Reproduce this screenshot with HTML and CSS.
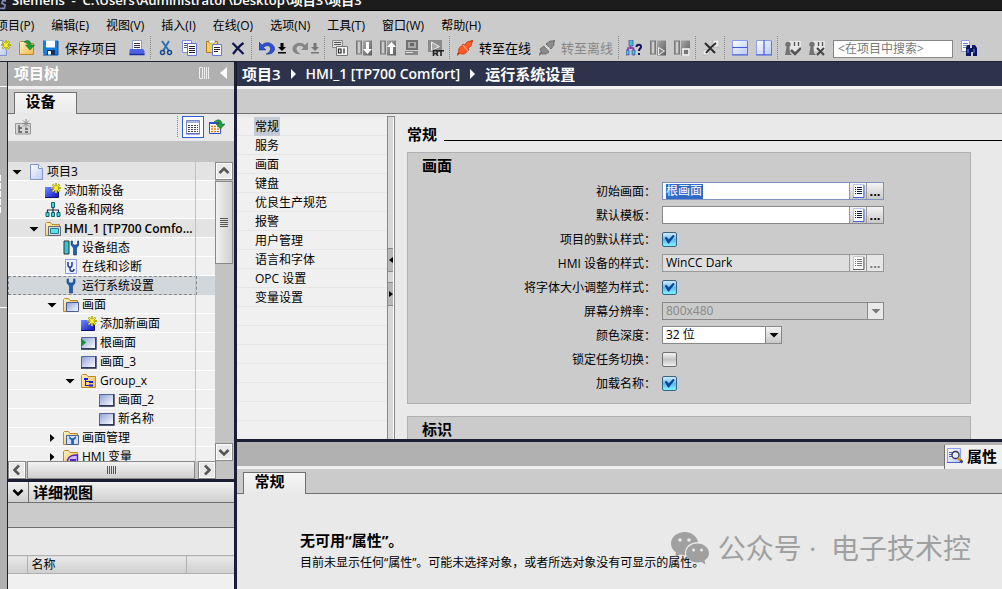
FILE: index.html
```html
<!DOCTYPE html>
<html lang="zh-CN">
<head>
<meta charset="utf-8">
<title>Siemens - 项目3</title>
<link rel="stylesheet" href="styles.css">
</head>
<body>
<svg class="defs" aria-hidden="true">
  <defs>
    <linearGradient id="gBlue" x1="0" y1="0" x2="1" y2="1"><stop offset="0" stop-color="#8f9fd6"/><stop offset="1" stop-color="#fff"/></linearGradient>
    <linearGradient id="gDeep" x1="0" y1="0" x2="1" y2="1"><stop offset="0" stop-color="#6f8cff"/><stop offset="1" stop-color="#0c12b8"/></linearGradient>
    <linearGradient id="gFold" x1="0" y1="0" x2="1" y2="1"><stop offset="0" stop-color="#fff3c4"/><stop offset="1" stop-color="#f0b848"/></linearGradient>
    <linearGradient id="gPage" x1="0" y1="0" x2="1" y2="1"><stop offset="0" stop-color="#fff"/><stop offset="1" stop-color="#b9c8f5"/></linearGradient>
    <linearGradient id="gGray" x1="0" y1="0" x2="1" y2="1"><stop offset="0" stop-color="#a8a8a8"/><stop offset="1" stop-color="#5c5c5c"/></linearGradient>
    <symbol id="i-star" viewBox="0 0 16 16"><path d="M11 0v10M6 5h10M7.500 1.500l7 7M14.500 1.500l-7 7" stroke="#6b6b20" stroke-width="2"/><path d="M11 0v10M6 5h10M7.500 1.500l7 7M14.500 1.500l-7 7" stroke="#fff230" stroke-width="1.200"/></symbol>
    <symbol id="i-page" viewBox="0 0 16 16"><path d="M2.500 .5h8l4 4v11h-12z" fill="url(#gPage)" stroke="#8295c8"/><path d="M10.500 .5v4h4" fill="#fff" stroke="#8295c8"/></symbol>
    <symbol id="i-folder" viewBox="0 0 16 16"><path d="M.5 14.500V2.500l1-1h4l1.500 2h7.500v11z" fill="url(#gFold)" stroke="#c08a28"/></symbol>
    <symbol id="i-add" viewBox="0 0 16 16"><path d="M0 4h13v11H0z" fill="url(#gDeep)"/><path d="M0 14.500h13.500V9" fill="none" stroke="#101470"/><use href="#i-star"/></symbol>
    <symbol id="i-screen" viewBox="0 0 16 16"><path d="M.5 2.500h14v11H.5z" fill="url(#gBlue)" stroke="#55679a"/><path d="M0 14h15V2" fill="none" stroke="#202c48" stroke-width="1.300"/></symbol>
    <symbol id="i-wrench" viewBox="0 0 16 16"><path d="M4 1v4l2.500 3v7h3V8L12 5V1h-1.500v3L9 5H7L5.500 4V1z" fill="#1d5fae" stroke="#123c78" stroke-width=".6"/></symbol>
    <symbol id="i-listpage" viewBox="0 0 16 16"><path d="M3.500 1.500h10v13h-10z" fill="#fff" stroke="#b8c4f0"/><path d="M3 14.500h11V2" fill="none" stroke="#4a64d8"/><path d="M5 4.500h1M7 4.500h5M5 6.500h1M7 6.500h5M5 8.500h1M7 8.500h5M5 10.500h1M7 10.500h5" stroke="currentColor"/></symbol>
    <symbol id="i-down" viewBox="0 0 8 16"><path d="M2.500 3h3v4H8L4 11 0 7h2.500zM0 12h8v1.500H0z"/></symbol>
    <symbol id="i-panel" viewBox="0 0 16 16"><path d="M0 .5h6v14H0z" fill="#777"/><path d="M1.500 1.500h3v12h-3z" fill="#ccc" stroke="#999"/><path d="M7 .5h9v15H7z" fill="url(#gGray)"/></symbol>
    <symbol id="i-person" viewBox="0 0 16 16"><path d="M3 1h13v10H3z" fill="#e6e6e6"/><circle cx="3" cy="4.500" r="2.700" fill="#737373"/><path d="M1.500 7h3l.5 6 2 2H0z" fill="#737373"/><path d="M9.500 2v4M13.500 2v4" stroke="#555" stroke-width="1.300"/></symbol>
    <symbol id="i-tdown" viewBox="0 0 12 12"><path d="M1.500 4h9L6 8.500z"/></symbol>
    <symbol id="i-tright" viewBox="0 0 12 12"><path d="M4 2v8l4.500-4z"/></symbol>
    <symbol id="i-chev" viewBox="0 0 12 12"><path d="M1.500 4L6 8.500 10.500 4" fill="none" stroke="currentColor" stroke-width="2.500"/></symbol>
  </defs>
</svg>

<header class="titlebar"><svg class="logo" viewBox="0 0 8 12"><path d="M7 1H3L2 4l4 2-1 4H0" fill="none" stroke="#7c86b8" stroke-width="2"/></svg><h1>Siemens&nbsp; -&nbsp; C:\Users\Administrator\Desktop\项目3\项目3</h1></header>

<nav class="menubar">
  <button>项目(P)</button><button>编辑(E)</button><button>视图(V)</button><button>插入(I)</button><button>在线(O)</button><button>选项(N)</button><button>工具(T)</button><button>窗口(W)</button><button>帮助(H)</button>
</nav>

<div class="toolbar">
  <div class="group first">
    <button aria-label="新建"><svg viewBox="0 0 16 16"><use href="#i-page" x="-3"/><use href="#i-star"/></svg></button>
    <button aria-label="打开"><svg viewBox="0 0 16 16"><use href="#i-folder"/><path d="M5 2c4-3 7-1 7 3h3.500L11 10 6.500 5H9C9 3 8 2 5 2z" fill="#1f9a36" stroke="#0d6420" stroke-width=".5"/></svg></button>
    <button class="labeled"><svg viewBox="0 0 16 16"><path d="M0 .5h15v14.500H2L0 13z" fill="#127fe0"/><path d="M3 .5h9v7H3z" fill="#fff"/><path d="M4 10h8v5H4z" fill="#10305c"/><path d="M5 11h3v4H5z" fill="#fff"/><path d="M0 15h15V1" fill="none" stroke="#0b4d9c"/></svg><span>保存项目</span></button>
    <button class="print" aria-label="打印"><svg viewBox="0 0 16 16"><path d="M3.500.5h9v9h-9z" fill="#fff" stroke="#8e9cc8"/><path d="M5 3.500h6M5 5.500h6M5 7.500h6" stroke="#334"/><path d="M1 9h13l1.500 2v4H.5v-4z" fill="#4b63e0"/><path d="M.5 14.500h15" stroke="#1b2aa0" stroke-width="1.500"/></svg></button>
  </div>
  <div class="group">
    <button aria-label="剪切"><svg viewBox="0 0 16 16"><path d="M4 1l7 10M11 1L5 11" stroke="#3270b0" stroke-width="2"/><circle cx="4.500" cy="12.500" r="2" fill="none" stroke="#174a8a" stroke-width="1.500"/><circle cx="11.500" cy="12.500" r="2" fill="none" stroke="#174a8a" stroke-width="1.500"/></svg></button>
    <button aria-label="复制"><svg viewBox="0 0 16 16"><path d="M.5.5h9v12h-9z" fill="#fff" stroke="#7d8fd8"/><path d="M2 3.500h5M2 5.500h5M2 7.500h5" stroke="#557"/><path d="M5.500 3.500h9v12h-9z" fill="#fff" stroke="#6478d8"/><path d="M7 6.500h6M7 8.500h6M7 10.500h6M7 12.500h6" stroke="#223"/></svg></button>
    <button aria-label="粘贴"><svg viewBox="0 0 16 16"><path d="M.5 1.500h11v11H.5z" fill="#f5cf5c" stroke="#a87c22"/><path d="M3 0h6v3H3z" fill="#fff" stroke="#888" stroke-width=".6"/><path d="M6.500 4.500h9v11h-9z" fill="#fff" stroke="#6478d8"/><path d="M8 7.500h6M8 9.500h6M8 11.500h4" stroke="#223"/></svg></button>
    <button aria-label="删除"><svg viewBox="0 0 16 16"><path d="M2.500 3l11 11M13.500 3C9 6 6 10 3 14" fill="none" stroke="#10144c" stroke-width="2.200"/></svg></button>
  </div>
  <div class="group tight">
    <button aria-label="撤销"><svg viewBox="0 0 16 16"><path d="M0 2v8h7L4.500 7.500C8 4 12 6 11.500 9S9 13 7 14c5 1 9-2 8.500-6S8 0 3 5z" fill="#2d50d0" stroke="#1a2f96" stroke-width=".5"/></svg></button>
    <button class="narrow" aria-label="撤销列表"><svg viewBox="0 0 8 16"><use href="#i-down"/></svg></button>
    <button class="redo" aria-label="重做"><svg viewBox="0 0 16 16"><path d="M16 2v8H9l2.500-2.500C8 4 4 6 4.500 9S7 13 9 14C4 15 0 12 .5 8S8 0 13 5z" fill="#868686"/></svg></button>
    <button class="narrow" aria-label="重做列表"><svg viewBox="0 0 8 16" fill="#777"><use href="#i-down"/></svg></button>
  </div>
  <div class="group">
    <button aria-label="编译"><svg viewBox="0 0 16 16"><path d="M.5.5h10v7H.5z" fill="#ddd" stroke="#888"/><path d="M2 2.500h7M2 4.500h7" stroke="#555"/><path d="M4.500 6.500h11v9h-11z" fill="#f4f4f4" stroke="#777"/><path d="M6.500 9h2.500v4H6.500zM12 8.500v5" fill="none" stroke="#222" stroke-width="1.200"/></svg></button>
    <button aria-label="下载"><svg viewBox="0 0 16 16"><use href="#i-panel"/><path d="M10 2h3v7h3l-4.500 5L7 9h3z" fill="#fff"/></svg></button>
    <button aria-label="上传"><svg viewBox="0 0 16 16"><use href="#i-panel"/><path d="M10 14h3V7h3l-4.500-5L7 7h3z" fill="#fff"/></svg></button>
    <button aria-label="仿真"><svg viewBox="0 0 16 16"><path d="M2 0h12v10H2z" fill="#707070"/><path d="M4 2h8v6H4z" fill="#aaa"/><path d="M6 3h4v3H6z" fill="#666"/><path d="M1 11h13v4H1z" fill="#888"/><path d="M2 12.500h7" stroke="#ddd"/></svg></button>
    <button aria-label="启动运行系统"><svg viewBox="0 0 16 16"><path d="M0 0h14v12H0z" fill="#8a8a8a"/><path d="M3.500 2l8 4.500-8 4z" fill="#aaa" stroke="#eee"/><path d="M5.500 16v-5.500H8a1.500 1.500 0 010 3H6M8 13.500l2 2.500M10 10.700h6M13 11v5" fill="none" stroke="#222" stroke-width="1.600"/></svg></button>
  </div>
  <div class="group">
    <button class="labeled"><svg viewBox="0 0 16 16"><path d="M0 15l3-3M16 0l-3 3" stroke="#d6400c" stroke-width="2"/><path d="M2 13c-1-4 0-6 3-7l1-2 2 1c1-3 3-4 7-4 0 4-1 6-4 7l1 2-2 1c-1 3-4 4-8 2z" fill="#ff5a24" stroke="#b7320b" stroke-width=".7"/><path d="M6 5l5 6" stroke="#ffc0a0"/></svg><span>转至在线</span></button>
    <button class="labeled" disabled><svg viewBox="0 0 16 16"><path d="M0 15l3-3M16 0l-3 3" stroke="#777" stroke-width="2"/><path d="M1 9l4-3 5 6-3 2H3zM7 4l4-3h4v4l-3 4z" fill="#8b8b8b" stroke="#666" stroke-width=".8"/><path d="M6 6l2 2M9 9l1-2" stroke="#eee"/></svg><span>转至离线</span></button>
  </div>
  <div class="group">
    <button aria-label="可访问的设备"><svg viewBox="0 0 16 16"><path d="M4.500 5v4M2 12V8h5.500v4" fill="none" stroke="#7d3bb0" stroke-width="1.500"/><path d="M3 0h4v6H3zM0 10h3v5H0zM6 10h3v5H6z" fill="#30c6d8" stroke="#6b35a0" stroke-width=".7"/><path d="M10.500 7c0-3 5-3 4.500 0-.2 1.500-2 1.800-2 4M13 13v2" fill="none" stroke="#10145c" stroke-width="2"/></svg></button>
    <button aria-label="启动 CPU"><svg viewBox="0 0 16 16"><use href="#i-panel"/><path d="M8.500 7.500l6 3.500-6 4z" fill="#888" stroke="#eee"/></svg></button>
    <button aria-label="停止 CPU"><svg viewBox="0 0 16 16"><use href="#i-panel"/><path d="M9 9h6v6H9z" fill="#777" stroke="#fff" stroke-width="1.500"/></svg></button>
  </div>
  <div class="group">
    <button aria-label="交叉引用"><svg viewBox="0 0 16 16"><path d="M10 0h6v7h-6zM0 10h6v5H0z" fill="#ececec" stroke="#aaa" stroke-width=".6"/><path d="M2 3l10 10M13 3C9 6 6 9 3 13" fill="none" stroke="#2b2b2b" stroke-width="2"/></svg></button>
  </div>
  <div class="group">
    <button aria-label="水平拆分"><svg viewBox="0 0 16 16"><path d="M.5.5h15v14H.5z" fill="url(#gPage)" stroke="#8d9cf0"/><path d="M0 7.500h16M0 15h16V1" fill="none" stroke="#4760d8" stroke-width="1.200"/></svg></button>
    <button aria-label="垂直拆分"><svg viewBox="0 0 16 16"><path d="M.5.5h15v14H.5z" fill="url(#gPage)" stroke="#8d9cf0"/><path d="M8 0v15M0 15h16V1" fill="none" stroke="#4760d8" stroke-width="1.200"/></svg></button>
  </div>
  <div class="group">
    <button aria-label="保存布局"><svg viewBox="0 0 16 16"><use href="#i-person"/><path d="M6 10l4 4 6-6" fill="none" stroke="#555" stroke-width="2.500"/></svg></button>
    <button aria-label="删除布局"><svg viewBox="0 0 16 16"><use href="#i-person"/><path d="M8 8l7 7M15 8l-7 7" stroke="#444" stroke-width="2"/></svg></button>
    <input class="search" type="text" aria-label="搜索" placeholder="&lt;在项目中搜索&gt;">
    <button aria-label="查找"><svg viewBox="0 0 16 16"><path d="M.5.500h8v11h-8z" fill="#fff" stroke="#8d9cf0"/><path d="M2 3.500h5M2 5.500h5M2 7.500h3" stroke="#6a82d8"/><path d="M5 8l1-3h3v3h2V5h3l2 3v8h-4v-4h-2v4H5z" fill="#0d1660"/><path d="M7 9v4M13 9v4" stroke="#6f8cf0"/></svg></button>
  </div>
</div>

<div class="workspace">
  <aside class="rail"><i class="rail-top"></i><i class="rail-marks"></i><i class="rail-line"></i></aside>

  <section class="sidebar">
    <div class="panel-title"><h2>项目树</h2><svg class="pin" viewBox="0 0 11 12"><path d="M.5.5h3v11h-3zM5.500 0v12M7.500 0v12M9.500 0v12" fill="none" stroke="#eee"/></svg><svg class="fold" viewBox="0 0 7 12"><path d="M7 0v12L0 6z" fill="#fff"/></svg></div>
    <div class="tabs"><button class="tab">设备</button></div>
    <div class="tree-tools">
      <button aria-label="新建组"><svg viewBox="0 0 16 16"><path d="M.5 15V4.500h15V15z" fill="#d8d8d8" stroke="#999"/><path d="M4 6v7h3M4 9h3M10 10h3M10 13h3" fill="none" stroke="#555" stroke-width="1.300"/><path d="M11 0v9M7 4.500h8M8 1.500l6 6M14 1.500l-6 6" stroke="#888"/></svg></button>
      <span class="grow"></span>
      <button class="active" aria-label="列表视图"><svg viewBox="0 0 16 16"><path d="M1.500 1.500h13v13h-13z" fill="#fff" stroke="#7c88b8"/><path d="M2 3h12" stroke="#a3b2e6" stroke-width="2"/><path d="M3 6.500h10M3 8.500h10M3 10.500h10M3 12.500h10" stroke="#445" stroke-dasharray="2 1"/><path d="M1 15h14" stroke="#4058c0"/></svg></button>
      <button aria-label="总览"><svg viewBox="0 0 16 16"><path d="M.5 3.500h11v11H.5z" fill="#fff" stroke="#3150c0"/><path d="M0 4h11" stroke="#3152d0" stroke-width="2"/><path d="M2 7.500h9M2 10h9M2 12.500h9" stroke="#e08018" stroke-width="1.500" stroke-dasharray="2 1"/><path d="M5 3c4-4 8-2 8 2h3l-4.500 5L7 5h3C10 3 8 2 5 3z" fill="#1f9a36" stroke="#0d6420" stroke-width=".5"/></svg></button>
    </div>
    <div class="tree-gap"></div>
    <div class="tree-area">
      <ul class="tree">
        <li class="l0 shade"><svg class="tw" viewBox="0 0 12 12"><use href="#i-tdown"/></svg><svg viewBox="0 0 16 16"><use href="#i-page"/></svg>项目3</li>
        <li class="l1"><i class="tw"></i><svg viewBox="0 0 16 16"><use href="#i-add"/></svg>添加新设备</li>
        <li class="l1"><i class="tw"></i><svg viewBox="0 0 16 16"><path d="M8 4v8M2.500 12V8h11v4" fill="none" stroke="#234" stroke-width="1.200"/><path d="M6.500.5h3v5h-3zM1 10.500h3v4H1zM6.500 10.500h3v4h-3zM12 10.500h3v4h-3z" fill="#45d6e0" stroke="#12606c"/></svg>设备和网络</li>
        <li class="l1 shade strong"><svg class="tw" viewBox="0 0 12 12"><use href="#i-tdown"/></svg><svg viewBox="0 0 16 16"><use href="#i-folder"/><path d="M3.500 5.500h12v9h-12z" fill="#d7dce4" stroke="#667"/><path d="M5.500 7.500h8v5h-8z" fill="#5fe0e8" stroke="#2a7a8c"/></svg>HMI_1 [TP700 Comfo...</li>
        <li class="l2"><i class="tw"></i><svg viewBox="0 0 16 16"><path d="M1 1h5v13H1z" fill="#35c6cc" stroke="#333"/><use href="#i-wrench" x="4"/></svg>设备组态</li>
        <li class="l2"><i class="tw"></i><svg viewBox="0 0 16 16"><path d="M2.500.5h11v14h-11z" fill="#eef2ff" stroke="#8ea0e0"/><path d="M5 3v3c0 3 4 3 4 0V3M7 8v2c0 3 4 3 4 0" fill="none" stroke="#17308c" stroke-width="1.400"/></svg>在线和诊断</li>
        <li class="l2 selected"><i class="tw"></i><svg viewBox="0 0 16 16"><use href="#i-wrench"/></svg>运行系统设置</li>
        <li class="l2"><svg class="tw" viewBox="0 0 12 12"><use href="#i-tdown"/></svg><svg viewBox="0 0 16 16"><use href="#i-folder"/><path d="M3.500 5.500h12v9h-12z" fill="url(#gBlue)" stroke="#4b5f95"/></svg>画面</li>
        <li class="l3"><i class="tw"></i><svg viewBox="0 0 16 16"><use href="#i-add"/></svg>添加新画面</li>
        <li class="l3"><i class="tw"></i><svg viewBox="0 0 16 16"><use href="#i-screen"/><path d="M0 3v9l5-4.500z" fill="#149436"/></svg>根画面</li>
        <li class="l3"><i class="tw"></i><svg viewBox="0 0 16 16"><use href="#i-screen"/></svg>画面_3</li>
        <li class="l3"><svg class="tw" viewBox="0 0 12 12"><use href="#i-tdown"/></svg><svg viewBox="0 0 16 16"><use href="#i-folder"/><path d="M4.500 6v7M4 8.500h4M4 12.500h5" fill="none" stroke="#1a1ae0"/><path d="M3 5h4v2H3zM8 8h4v2H8zM8 11.500h4v2H8z" fill="#1a1ae0"/></svg>Group_x</li>
        <li class="l4"><i class="tw"></i><svg viewBox="0 0 16 16"><use href="#i-screen"/></svg>画面_2</li>
        <li class="l4"><i class="tw"></i><svg viewBox="0 0 16 16"><use href="#i-screen"/></svg>新名称</li>
        <li class="l2"><svg class="tw" viewBox="0 0 12 12"><use href="#i-tright"/></svg><svg viewBox="0 0 16 16"><use href="#i-folder"/><path d="M3.500 5.500h12v9h-12z" fill="#cfe0ff" stroke="#4b5f95"/><path d="M6.500 6.500v2l2 1.500v4h2v-4l2-1.500v-2l-2 2h-2z" fill="#1d5fae" stroke="#1d5fae" stroke-width=".6"/></svg>画面管理</li>
        <li class="l2"><svg class="tw" viewBox="0 0 12 12"><use href="#i-tright"/></svg><svg viewBox="0 0 16 16"><use href="#i-folder"/><path d="M4.500 11c2-5 6-5 10-5v9h-10z" fill="#cdbcf8" stroke="#5a28b8" stroke-width="1.500"/><path d="M7 11h6" stroke="#5a28b8" stroke-width="2"/></svg>HMI 变量</li>
      </ul>
      <div class="vscroll"><button aria-label="向上"><svg class="flip" viewBox="0 0 12 12"><use href="#i-chev"/></svg></button><div class="thumb-v"><i></i></div><span class="grow"></span><button aria-label="向下"><svg viewBox="0 0 12 12"><use href="#i-chev"/></svg></button></div>
    </div>
    <div class="hscroll"><button aria-label="向左"><svg class="left" viewBox="0 0 12 12"><use href="#i-chev"/></svg></button><div class="thumb-h"><i></i></div><button aria-label="向右"><svg class="right" viewBox="0 0 12 12"><use href="#i-chev"/></svg></button></div>
    <div class="details">
      <div class="details-head"><button aria-label="折叠"><svg viewBox="0 0 12 12"><use href="#i-chev"/></svg></button><h2>详细视图</h2></div>
      <div class="details-bar"></div>
      <div class="details-tools"></div>
      <table class="details-table"><thead><tr><th class="c1"></th><th>名称</th><th class="c3"></th></tr></thead></table>
    </div>
  </section>

  <main class="main">
    <nav class="crumbs"><span>项目3</span><svg viewBox="0 0 5 10"><path d="M0 0v10l5-5z"/></svg><span class="latin">HMI_1 [TP700 Comfort]</span><svg viewBox="0 0 5 10"><path d="M0 0v10l5-5z"/></svg><span>运行系统设置</span></nav>
    <div class="editor-bar"></div>
    <div class="editor">
      <ul class="sections">
        <li><span class="current">常规</span></li><li><span>服务</span></li><li><span>画面</span></li><li><span>键盘</span></li><li><span>优良生产规范</span></li><li><span>报警</span></li><li><span>用户管理</span></li><li><span>语言和字体</span></li><li><span>OPC 设置</span></li><li><span>变量设置</span></li>
      </ul>
      <div class="splitter"><button aria-label="收起"><svg viewBox="0 0 4 6"><path d="M4 0v6L0 3z"/></svg></button><button aria-label="展开"><svg viewBox="0 0 4 6"><path d="M0 0v6l4-3z"/></svg></button></div>
      <div class="form">
        <h2 class="rule">常规</h2>
        <fieldset class="card">
          <h3>画面</h3>
          <div class="rows">
            <label for="f1">初始画面<b>：</b></label><div class="picker focus"><div class="entry"><input id="f1" type="text" value="根画面" class="marked" size="4"></div><button aria-label="列表"><svg viewBox="0 0 16 16"><use href="#i-listpage"/></svg></button><button class="dots">...</button></div>
            <label for="f2">默认模板<b>：</b></label><div class="picker"><div class="entry"><input id="f2" type="text"></div><button aria-label="列表"><svg viewBox="0 0 16 16"><use href="#i-listpage"/></svg></button><button class="dots">...</button></div>
            <label for="f3">项目的默认样式<b>：</b></label><input id="f3" class="check" type="checkbox" checked>
            <label for="f4">HMI 设备的样式<b>：</b></label><div class="picker off"><div class="entry"><input id="f4" type="text" value="WinCC Dark" readonly></div><button aria-label="列表" disabled><svg viewBox="0 0 16 16"><use href="#i-listpage"/></svg></button><button class="dots" disabled>...</button></div>
            <label for="f5">将字体大小调整为样式<b>：</b></label><input id="f5" class="check" type="checkbox" checked>
            <label for="f6">屏幕分辨率<b>：</b></label><div class="drop off"><select id="f6" disabled><option>800x480</option></select><span><svg viewBox="0 0 12 12"><use href="#i-tdown"/></svg></span></div>
            <label for="f7">颜色深度<b>：</b></label><div class="drop short"><select id="f7"><option>32 位</option></select><span><svg viewBox="0 0 12 12"><use href="#i-tdown"/></svg></span></div>
            <label for="f8">锁定任务切换<b>：</b></label><input id="f8" class="check" type="checkbox">
            <label for="f9">加载名称<b>：</b></label><input id="f9" class="check" type="checkbox" checked>
          </div>
        </fieldset>
        <fieldset class="card"><h3>标识</h3></fieldset>
      </div>
    </div>
    <section class="inspector">
      <div class="inspector-head"><button><svg viewBox="0 0 16 16"><path d="M.5.500h13v14H.5z" fill="url(#gPage)" stroke="#8d9cf0"/><path d="M0 14.500h13" stroke="#4760d8"/><path d="M2 4.500h4M2 6.500h3M2 8.500h3" stroke="#4760d8"/><circle cx="8.500" cy="7" r="3.500" fill="#e6f0ff" stroke="#334" stroke-width="1.300"/><path d="M11 10l4 4" stroke="#e09018" stroke-width="2.500"/><path d="M13.500 12.500l2 2" stroke="#1c3f98" stroke-width="2.500"/></svg>属性</button></div>
      <div class="tabs"><button class="tab">常规</button></div>
      <div class="inspector-body"><h3>无可用“属性”。</h3><p>目前未显示任何“属性”。可能未选择对象，或者所选对象没有可显示的属性。</p></div>
    </section>
  </main>
</div>
<div class="watermark"><svg viewBox="0 0 38 33"><path d="M14 0C6 0 0 5 0 11.500c0 4 2 7 5 9L4 25l5-2.500 5 .8C13 15 19 10 27 10 26 4 20 0 14 0z"/><path d="M26.500 11.500C20 11.500 15 16 15 21s5 9.500 11.500 9.500l4-.5 4 2.500-1-4c3-2 4.500-4.500 4.500-7.500 0-5-5-9.500-11.500-9.500z"/><g fill="#e9e9e9"><circle cx="9" cy="8" r="1.800"/><circle cx="18" cy="8" r="1.800"/><circle cx="22.500" cy="18" r="1.500"/><circle cx="30.500" cy="18" r="1.500"/></g></svg><span>公众号 ·&nbsp; 电子技术控</span></div>
</body>
</html>
```
FILE: styles.css
```css
* { box-sizing: border-box; }
body {
  margin: 0;
  height: 100vh;
  display: flex;
  flex-direction: column;
  overflow: hidden;
  background: #cbcbcb;
  color: #000;
  font: 12px/18px "Open Sans", "Noto Sans CJK SC", sans-serif;
}
h1, h2, h3, p, ul { margin: 0; padding: 0; }
ul { list-style: none; }
h2, h3 { font-size: 15px; line-height: 20px; }
button { font: inherit; color: inherit; border: 0; padding: 0; margin: 0; background: none; }
svg { display: block; width: 16px; height: 16px; flex: none; }
.defs { position: absolute; width: 0; height: 0; }
.grow { flex: 1; }

.titlebar { display: flex; flex: none; align-items: flex-end; gap: 5px; height: 11px; background: #1c1c1c; border-bottom: 1px solid #000; color: #fff; overflow: hidden; }
.titlebar h1 { font-size: 13px; line-height: 20px; font-weight: 600; white-space: nowrap; }
.titlebar .logo { width: 7px; height: 10px; }
.menubar { display: flex; flex: none; align-items: center; gap: 17px; height: 25px; padding-top: 4px; margin-left: -4px; white-space: nowrap; }
.toolbar { display: flex; flex: none; height: 26px; padding-bottom: 2px; border-bottom: 1px solid #1c2230; white-space: nowrap; }
.group { display: flex; flex: none; align-items: center; gap: 8px; margin-left: 5px; padding-left: 7px; border-left: 1px dotted #888; }
.group.first { margin-left: -5px; padding: 0; border: 0; }
.group.tight { gap: 3px; }
.redo { margin-left: 3px; }
.narrow svg { width: 8px; }
.labeled { display: flex; align-items: center; gap: 6px; font-size: 13px; }
.labeled:disabled { color: #888; }
.print { margin-left: 4px; }
.search { width: 120px; height: 18px; margin-top: 2px; padding: 0 4px; border: 1px solid #888; background: #fff; font: inherit; }
.search::placeholder { color: #777; opacity: 1; }

.workspace { display: flex; flex: 1; min-height: 0; }
.rail { width: 8px; flex: none; background: #b1b1b1; border-right: 1px solid #1c1e33; display: flex; flex-direction: column; }
.rail-top { height: 25px; border-bottom: 1px solid #fff; }
.rail-marks { width: 1px; height: 40px; margin-top: 88px; background: repeating-linear-gradient(#fff 0 6px, #b1b1b1 6px 8px); }
.rail-line { margin-top: 92px; border-top: 1px solid #fff; }

.sidebar { width: 229px; flex: none; display: flex; flex-direction: column; border-right: 3px solid #1c1e33; background: #c3c3c3; }
.panel-title { display: flex; flex: none; align-items: center; height: 27px; padding: 0 7px 2px 6px; background: #b1b1b1; border-bottom: 3px solid #efefef; color: #fff; }
.panel-title h2 { flex: 1; }
.panel-title .pin { width: 11px; height: 12px; margin-right: 10px; }
.panel-title .fold { width: 7px; height: 12px; }
.tabs { display: flex; flex: none; align-items: flex-end; height: 25px; padding-left: 6px; background: #cbcbcb; box-shadow: inset 0 -1px #707070; }
.tab { width: 63px; height: 22px; padding: 0 10px 4px 0; border: 1px solid #707070; border-bottom: 0; background: linear-gradient(#f6f6f6, #e9e9e9); font-size: 15px; line-height: 17px; font-weight: 700; }
.tree-tools { display: flex; flex: none; align-items: center; height: 27px; padding: 0 9px 2px 7px; background: #e9e9e9; }
.tree-tools .grow { align-self: stretch; margin: 2px 4px 2px 0; border-right: 1px dotted #888; }
.tree-tools .active { padding: 2px; margin-right: 5px; border: 1px solid #2f5fd0; background: #fff; }
.tree-gap { flex: none; height: 21px; }
.tree-area { display: flex; flex: 1; min-height: 0; overflow: hidden; }
.tree { flex: 1; position: relative; }
.tree::after { content: ""; position: absolute; top: 0; bottom: 0; right: 19px; border-left: 1px solid #c3c3c3; }
.tree li { display: flex; align-items: center; height: 19px; gap: 3px; background: #f0f0f0; box-shadow: inset 0 -1px #fff; white-space: nowrap; }
.tree .tw { width: 12px; height: 12px; margin-right: 2px; }
.tree .l0 { padding-left: 3px; }
.tree .l1 { padding-left: 20px; }
.tree .l2 { padding-left: 38px; }
.tree .l3 { padding-left: 56px; }
.tree .l4 { padding-left: 74px; }
.tree .shade { background: #e3e3e3; }
.tree .strong { font-weight: 600; }
.tree .selected { position: relative; background: #d2d7dc; box-shadow: none; }
.tree .selected::after { content: ""; position: absolute; inset: 0 18px 0 0; border: 1px dashed #888; }
.vscroll { width: 19px; flex: none; display: flex; flex-direction: column; gap: 1px; background: #c3c3c3; }
.vscroll button, .hscroll button { display: grid; place-items: center; width: 18px; height: 18px; border: 1px solid #888; background: #e9e9e9; box-shadow: inset 0 0 0 1px #fff; color: #555; }
.vscroll svg, .hscroll svg { width: 12px; height: 12px; }
.flip { transform: rotate(180deg); }
.left { transform: rotate(90deg); }
.right { transform: rotate(-90deg); }
.thumb-v { display: grid; place-items: center; width: 18px; height: 83px; border: 1px solid #888; background: linear-gradient(90deg, #f2f2f2, #cfcfcf); }
.thumb-v i { width: 8px; height: 9px; background: repeating-linear-gradient(#555 0 1px, transparent 1px 2px); }
.hscroll { display: flex; flex: none; gap: 1px; height: 18px; margin-right: 18px; }
.thumb-h { flex: 1; display: grid; place-items: center; margin-right: 2px; border: 1px solid #888; background: linear-gradient(#f2f2f2, #cfcfcf); }
.thumb-h i { width: 9px; height: 8px; background: repeating-linear-gradient(90deg, #555 0 1px, transparent 1px 2px); }
.details { flex: none; height: 110px; border-top: 3px solid #1c1e33; background: #f0f0f0; }
.details-head { display: flex; height: 21px; border-bottom: 1px solid #707070; background: linear-gradient(#f2f2f2, #cfcfcf); }
.details-head button { display: grid; place-items: center; width: 21px; margin-right: 4px; border-right: 1px solid #707070; }
.details-head svg { width: 12px; height: 12px; }
.details-bar { height: 25px; border-bottom: 1px solid #707070; background: #cbcbcb; }
.details-tools { height: 27px; background: #e9e9e9; }
.details-table { width: 100%; table-layout: fixed; border-collapse: collapse; }
.details-table th { height: 18px; padding: 0 0 0 4px; border: solid #b0b0b0; border-width: 1px 1px 1px 0; background: linear-gradient(#e9e9e9, #cfcfcf); font-weight: 400; text-align: left; line-height: 16px; }
.details-table .c1 { width: 19px; }
.details-table .c3 { width: 48px; border-right: 0; }

.main { flex: 1; min-width: 0; display: flex; flex-direction: column; background: #e9e9e9; }
.crumbs { display: flex; flex: none; align-items: center; gap: 10px; height: 27px; padding-left: 5px; background: #2c334b; border-bottom: 3px solid #f2f2f2; color: #fff; font-size: 15px; font-weight: 600; white-space: nowrap; }
.crumbs .latin { font-size: 14px; }
.crumbs svg { width: 5px; height: 10px; fill: #fff; }
.editor-bar { flex: none; height: 25px; border-bottom: 1px solid #707070; }
.editor-bar, .inspector .tabs { background: #cbcbcb; }
.editor { display: flex; flex: 1; min-height: 0; overflow: hidden; }
.sections { width: 150px; flex: none; margin-top: 3px; background: repeating-linear-gradient(#f0f0f0 0 18px, #e6e6e6 18px 19px); }
.sections li { height: 19px; padding-left: 17px; line-height: 19px; }
.sections span { display: inline-block; padding: 0 1px; }
.sections .current { background: #c2cbd6; }
.splitter { width: 8px; flex: none; margin-top: 2px; padding-top: 131px; border: solid #888; border-width: 1px 1px 0; background: #d8d8d8; box-shadow: inset -1px 0 #fff; display: flex; flex-direction: column; gap: 10px; }
.splitter button { display: grid; place-items: center; width: 5px; height: 24px; border: solid #888; border-width: 1px 0; background: #b8b8b8; }
.splitter svg { width: 4px; height: 6px; }
.form { flex: 1; min-width: 0; padding: 10px 0 0 12px; }
.rule { display: flex; gap: 7px; }
.rule::after { content: ""; flex: 1; height: 1px; margin-top: 16px; background: #000; }
.card { margin: 8px 31px 12px 0; padding: 2px 14px 8px; min-height: 42px; border: 1px solid #b0b0b0; background: #cbcbcb; }
.rows { display: grid; grid-template-columns: 234px minmax(0, 1fr); column-gap: 6px; grid-auto-rows: 24px; align-items: center; padding-top: 4px; }
.rows label { text-align: right; white-space: nowrap; }
.rows b { font-family: "Noto Sans CJK JP", sans-serif; font-weight: 400; }
.picker { display: flex; width: 222px; height: 18px; border: 1px solid #888; background: #fff; }
.picker.focus { border-color: #7f92c0; }
.picker .entry { flex: 1; min-width: 0; display: flex; align-items: center; }
.picker input { width: 100%; height: 15px; margin: 0 3px; padding: 0; border: 0; background: none; font: inherit; outline: 0; }
.picker input.marked { width: 37px; background: #316ac5; color: #fff; }
.picker button { display: grid; place-items: center; width: 17px; border-left: 1px solid #999; background: linear-gradient(#f4f4f4, #c8c8c8); color: #102060; }
.picker svg { width: 16px; height: 16px; }
.picker .dots { color: #000; font-weight: 700; font-size: 13px; line-height: 14px; }
.picker.off { border-color: #999; background: #dedede; }
.picker.off button { background: #e6e6e6; color: #777; }
.picker.off svg { filter: grayscale(1); }
.drop { display: grid; width: 222px; height: 18px; }
.drop.short { width: 120px; }
.drop select, .drop span { grid-area: 1 / 1; }
.drop select { appearance: none; width: 100%; height: 18px; padding: 0 3px; border: 1px solid #888; border-radius: 0; background: #fff; color: #000; font: inherit; line-height: 16px; opacity: 1; }
.drop span { justify-self: end; display: grid; place-items: center; width: 17px; border: 1px solid #888; background: linear-gradient(#f4f4f4, #c8c8c8); pointer-events: none; }
.drop svg { width: 12px; height: 12px; }
.drop.off select { background: #cbcbcb; color: #888; }
.drop.off span { background: #e9e9e9; }
.drop.off svg { fill: #777; }
.check { appearance: none; display: grid; place-items: center; width: 15px; height: 15px; margin: 0; border: 1px solid #707070; border-radius: 2px; background: linear-gradient(#f4f4f4, #c4c4c4 50%, #f0f0f0); }
.check:checked { border-color: #38618c; background: linear-gradient(#d8ecfa, #66b8e8 50%, #7cf4fc); }
.check:checked::after { content: ""; width: 10px; height: 9px; background: #08489c; clip-path: polygon(0 35%, 20% 25%, 42% 55%, 90% 0, 100% 20%, 45% 100%, 35% 100%); }

.inspector { flex: none; border-top: 3px solid #1c1e33; }
.inspector-head { display: flex; justify-content: flex-end; height: 27px; padding-top: 3px; background: linear-gradient(#b1b1b1 24px, #f0f0f0 24px); }
.inspector-head button { display: flex; align-items: center; gap: 4px; width: 58px; padding: 0 0 3px 2px; border-left: 1px solid #707070; background: #f0f0f0; font-size: 15px; font-weight: 700; white-space: nowrap; }
.inspector-body { min-height: 95px; padding: 36px 63px 0; }
.inspector-body p { margin-top: 4px; }
.watermark { position: absolute; right: 31px; bottom: 21px; display: flex; align-items: center; gap: 9px; color: #a0a0a0; font-size: 28px; line-height: 40px; white-space: nowrap; pointer-events: none; }
.watermark svg { width: 38px; height: 33px; fill: #a0a0a0; }
```
